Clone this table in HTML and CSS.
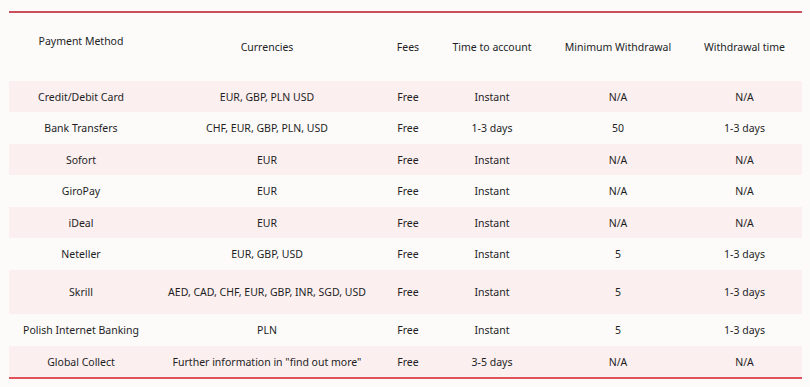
FILE: index.html
```
<!DOCTYPE html>
<html lang="en">
<head>
    <meta charset="UTF-8">
    <meta name="viewport" content="width=device-width, initial-scale=1.0">
    <title>Payment Methods</title>
    <link rel="stylesheet" href="styles.css">
</head>
<body>
    <div class="wrap">
        <table class="payments">
            <colgroup>
                <col class="c-method">
                <col class="c-currency">
                <col class="c-fees">
                <col class="c-time">
                <col class="c-min">
                <col class="c-withdraw">
            </colgroup>
            <thead>
                <tr>
                    <th><div class="th-raised">Payment Method</div></th>
                    <th>Currencies</th>
                    <th>Fees</th>
                    <th>Time to account</th>
                    <th>Minimum Withdrawal</th>
                    <th>Withdrawal time</th>
                </tr>
            </thead>
            <tbody>
                <tr>
                    <td>Credit/Debit Card</td>
                    <td>EUR, GBP, PLN USD</td>
                    <td>Free</td>
                    <td>Instant</td>
                    <td>N/A</td>
                    <td>N/A</td>
                </tr>
                <tr>
                    <td>Bank Transfers</td>
                    <td>CHF, EUR, GBP, PLN, USD</td>
                    <td>Free</td>
                    <td>1-3 days</td>
                    <td>50</td>
                    <td>1-3 days</td>
                </tr>
                <tr>
                    <td>Sofort</td>
                    <td>EUR</td>
                    <td>Free</td>
                    <td>Instant</td>
                    <td>N/A</td>
                    <td>N/A</td>
                </tr>
                <tr>
                    <td>GiroPay</td>
                    <td>EUR</td>
                    <td>Free</td>
                    <td>Instant</td>
                    <td>N/A</td>
                    <td>N/A</td>
                </tr>
                <tr>
                    <td>iDeal</td>
                    <td>EUR</td>
                    <td>Free</td>
                    <td>Instant</td>
                    <td>N/A</td>
                    <td>N/A</td>
                </tr>
                <tr>
                    <td>Neteller</td>
                    <td>EUR, GBP, USD</td>
                    <td>Free</td>
                    <td>Instant</td>
                    <td>5</td>
                    <td>1-3 days</td>
                </tr>
                <tr class="tall">
                    <td>Skrill</td>
                    <td>AED, CAD, CHF, EUR, GBP, INR, SGD, USD</td>
                    <td>Free</td>
                    <td>Instant</td>
                    <td>5</td>
                    <td>1-3 days</td>
                </tr>
                <tr>
                    <td>Polish Internet Banking</td>
                    <td>PLN</td>
                    <td>Free</td>
                    <td>Instant</td>
                    <td>5</td>
                    <td>1-3 days</td>
                </tr>
                <tr>
                    <td>Global Collect</td>
                    <td>Further information in "find out more"</td>
                    <td>Free</td>
                    <td>3-5 days</td>
                    <td>N/A</td>
                    <td>N/A</td>
                </tr>
            </tbody>
        </table>
    </div>
</body>
</html>
```

FILE: styles.css
```
body {
    margin: 0;
    background: #fdfbfa;
    font-family: "Noto Sans", "Liberation Sans", sans-serif;
    color: #221e1f;
}
.wrap {
    padding: 11px 8px 0 9px;
}
.payments {
    width: 793px;
    table-layout: fixed;
    border-collapse: collapse;
    border-top: 2px solid #c9505c;
    border-bottom: 2px solid #e0525c;
    font-size: 10.5px;
}
.c-method { width: 144px; }
.c-currency { width: 228px; }
.c-fees { width: 54px; }
.c-time { width: 114px; }
.c-min { width: 138px; }
.c-withdraw { width: 115px; }

.payments th {
    height: 68px;
    padding: 0 4px;
    font-weight: 400;
    text-align: center;
    vertical-align: middle;
}
.th-raised {
    margin-bottom: 12px;
}
.payments td {
    height: 31px;
    padding: 0 4px;
    text-align: center;
    vertical-align: middle;
}
.payments tbody tr:nth-child(odd) {
    background: #fcefef;
}
.payments tbody tr:nth-child(even) td {
    height: 32px;
}
.payments tr.tall td {
    height: 44px;
}
```
